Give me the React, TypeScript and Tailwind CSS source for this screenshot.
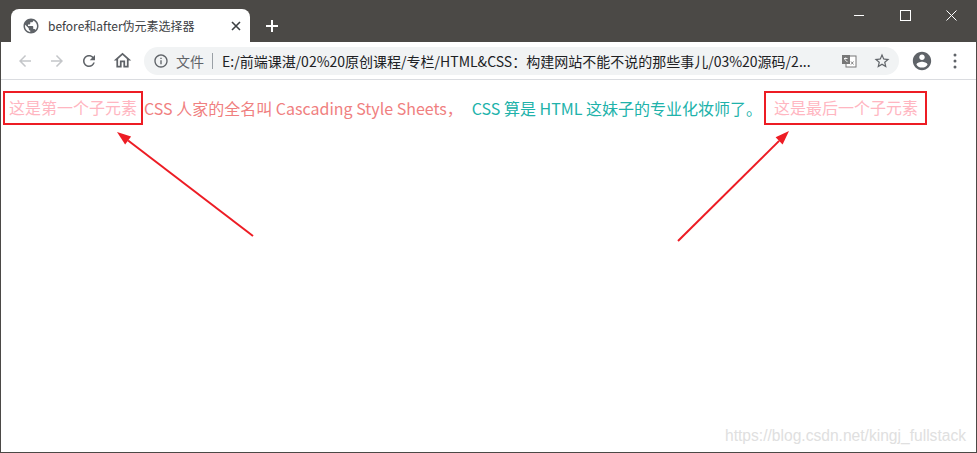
import React from 'react';

const cjk = { fontFamily: '"Noto Sans CJK SC", "Noto Sans", sans-serif' };

function Icon({ d, className }: { d: string; className?: string }) {
  return (
    <svg viewBox="0 0 24 24" className={className} fill="currentColor">
      <path d={d} />
    </svg>
  );
}

const ICONS = {
  back: 'M20 11H7.83l5.59-5.59L12 4l-8 8 8 8 1.41-1.41L7.83 13H20v-2z',
  forward: 'M12 4l-1.41 1.41L16.17 11H4v2h12.17l-5.58 5.59L12 20l8-8z',
  reload:
    'M17.65 6.35C16.2 4.9 14.21 4 12 4c-4.42 0-7.99 3.58-7.99 8s3.57 8 7.99 8c3.73 0 6.84-2.55 7.73-6h-2.08c-.82 2.33-3.04 4-5.65 4-3.31 0-6-2.69-6-6s2.69-6 6-6c1.66 0 3.14.69 4.22 1.78L13 11h7V4l-2.35 2.35z',
  home: 'M12 5.69l5 4.5V18h-2v-6H9v6H7v-7.81l5-4.5M12 3L2 12h3v8h6v-6h2v6h6v-8h3L12 3z',
  info: 'M11 7h2v2h-2zm0 4h2v6h-2zm1-9C6.48 2 2 6.48 2 12s4.48 10 10 10 10-4.48 10-10S17.52 2 12 2zm0 18c-4.41 0-8-3.59-8-8s3.59-8 8-8 8 3.59 8 8-3.59 8-8 8z',
  star: 'M22 9.24l-7.19-.62L12 2 9.19 8.63 2 9.24l5.46 4.73L5.82 21 12 17.27 18.18 21l-1.63-7.03L22 9.24zM12 15.4l-3.76 2.27 1-4.28-3.32-2.88 4.38-.38L12 6.1l1.71 4.04 4.38.38-3.32 2.88 1 4.28L12 15.4z',
  account:
    'M12 2C6.48 2 2 6.48 2 12s4.48 10 10 10 10-4.48 10-10S17.52 2 12 2zm0 3c1.66 0 3 1.34 3 3s-1.34 3-3 3-3-1.34-3-3 1.34-3 3-3zm0 14.2c-2.5 0-4.71-1.28-6-3.22.03-1.99 4-3.08 6-3.08 1.99 0 5.97 1.09 6 3.08-1.29 1.94-3.5 3.22-6 3.22z',
  globe:
    'M12 2C6.48 2 2 6.48 2 12s4.48 10 10 10 10-4.48 10-10S17.52 2 12 2zm-1 17.93c-3.95-.49-7-3.85-7-7.93 0-.62.08-1.21.21-1.79L9 15v1c0 1.1.9 2 2 2v1.93zm6.9-2.54c-.26-.81-1-1.39-1.9-1.39h-1v-3c0-.55-.45-1-1-1H8v-2h2c.55 0 1-.45 1-1V7h2c1.1 0 2-.9 2-2v-.41c2.93 1.19 5 4.06 5 7.41 0 2.08-.8 3.97-2.1 5.39z',
};

function TranslateIcon() {
  return (
    <svg viewBox="0 0 16 16" className="w-4 h-4">
      <rect x="5" y="3" width="10" height="11" fill="#fff" stroke="#777" strokeWidth="1" />
      <rect x="1" y="2" width="8" height="9" fill="#777" />
      <path d="M3 5.5h3.5M4.7 4.5v1M3.5 5.5c.6 1.8 1.6 2.8 3 3.2" stroke="#fff" strokeWidth="0.9" fill="none" />
      <path d="M10 8.5l2.5 3M12.5 8.5l-2.5 3" stroke="#777" strokeWidth="0.9" fill="none" />
    </svg>
  );
}

export default function App() {
  return (
    <div className="relative w-[977px] h-[453px] bg-[#4b4946] flex flex-col overflow-hidden" style={cjk}>
      {/* Tab strip */}
      <div className="h-[42px] flex items-end shrink-0">
        <div className="ml-[11px] w-[239px] h-[33px] bg-white rounded-t-[8px] flex items-center pl-[11px] pr-[9px]">
          <Icon d={ICONS.globe} className="w-[18px] h-[18px] text-[#5f6368]" />
          <span className="ml-[8px] text-[12px] text-[#3c4043] leading-none">before和after伪元素选择器</span>
          <svg viewBox="0 0 10 10" className="ml-auto w-[10px] h-[10px]">
            <path d="M1 1l8 8M9 1l-8 8" stroke="#3c4043" strokeWidth="1.6" />
          </svg>
        </div>
        <div className="w-[44px] h-[33px] flex items-center justify-center">
          <svg viewBox="0 0 12 12" className="w-[12px] h-[12px]">
            <path d="M6 0v12M0 6h12" stroke="#fff" strokeWidth="2" />
          </svg>
        </div>
        {/* window controls */}
        <div className="ml-auto mr-[3px] self-start flex h-[30px]">
          <div className="w-[46px] flex items-center justify-center">
            <div className="w-[10px] h-px bg-white" />
          </div>
          <div className="w-[46px] flex items-center justify-center">
            <div className="w-[11px] h-[11px] border border-white" />
          </div>
          <div className="w-[46px] flex items-center justify-center">
            <svg viewBox="0 0 11 11" className="w-[11px] h-[11px]">
              <path d="M0.5 0.5l10 10M10.5 0.5l-10 10" stroke="#fff" strokeWidth="1" />
            </svg>
          </div>
        </div>
      </div>

      <div className="flex-1 mx-px mb-px bg-white flex flex-col">
        {/* Toolbar */}
        <div className="h-[38px] border-b border-[#dadce0] flex items-center shrink-0">
          <div className="flex items-center pl-[15px] gap-[14px]">
            <Icon d={ICONS.back} className="w-[18px] h-[18px] text-[#c4c6c9]" />
            <Icon d={ICONS.forward} className="w-[18px] h-[18px] text-[#c4c6c9]" />
            <Icon d={ICONS.reload} className="w-[18px] h-[18px] text-[#5f6368]" />
            <Icon d={ICONS.home} className="w-[21px] h-[21px] text-[#5f6368]" />
          </div>
          <div className="ml-[11px] w-[755px] h-[28px] rounded-full bg-[#f1f3f4] flex items-center pl-[9px] pr-[8px]">
            <Icon d={ICONS.info} className="w-[16px] h-[16px] text-[#5f6368]" />
            <span className="ml-[7px] text-[14px] text-[#5f6368] leading-none">文件</span>
            <span className="ml-[8px] w-px h-[16px] bg-[#9aa0a6]" />
            <span className="ml-[9px] text-[14px] text-[#202124] leading-none whitespace-nowrap">
              E:/前端课湛/02%20原创课程/专栏/HTML&amp;CSS：构建网站不能不说的那些事儿/03%20源码/2...
            </span>
            <div className="ml-auto flex items-center gap-[16px]">
              <TranslateIcon />
              <Icon d={ICONS.star} className="w-[18px] h-[18px] text-[#5f6368]" />
            </div>
          </div>
          <div className="ml-[12px] flex items-center gap-[20px]">
            <Icon d={ICONS.account} className="w-[22px] h-[22px] text-[#5f6368]" />
            <svg viewBox="0 0 4 16" className="w-[4px] h-[16px]">
              <circle cx="2" cy="2" r="1.5" fill="#5f6368" />
              <circle cx="2" cy="8" r="1.5" fill="#5f6368" />
              <circle cx="2" cy="14" r="1.5" fill="#5f6368" />
            </svg>
          </div>
        </div>

        {/* Page content */}
        <div className="flex-1 relative pt-[11px] pl-[2px]">
          <div className="flex items-center text-[16px] leading-[22px] whitespace-nowrap">
            <span className="border-2 border-[#ed1c24] h-[34px] px-[4px] pb-[2px] flex items-center text-[#ffb6c1]">
              这是第一个子元素
            </span>
            <span className="ml-[1px] text-[#f08080]">CSS 人家的全名叫 Cascading Style Sheets，</span>
            <span className="ml-[9px] text-[#20b2aa]">CSS 算是 HTML 这妹子的专业化妆师了。</span>
            <span className="ml-[2px] border-2 border-[#ed1c24] h-[34px] pl-[8px] pr-[7px] pb-[2px] flex items-center text-[#ffb6c1]">
              这是最后一个子元素
            </span>
          </div>
          <div
            className="absolute right-[10px] bottom-[8px] text-[15.6px] leading-none text-[#e0e0e0]"
            style={{ fontFamily: '"Liberation Sans", Arial, sans-serif' }}
          >
            https://blog.csdn.net/kingj_fullstack
          </div>
        </div>
      </div>

      {/* annotation arrows */}
      <svg className="absolute inset-0 pointer-events-none" width="977" height="453">
        <line x1="253" y1="236" x2="128.1" y2="140.5" stroke="#ed1c24" strokeWidth="2" />
        <polygon points="117,132 131.1,136.5 125.1,144.5" fill="#ed1c24" />
        <line x1="678" y1="241" x2="779.1" y2="140.9" stroke="#ed1c24" strokeWidth="2" />
        <polygon points="789,131 782.6,144.4 775.6,137.3" fill="#ed1c24" />
      </svg>
    </div>
  );
}
